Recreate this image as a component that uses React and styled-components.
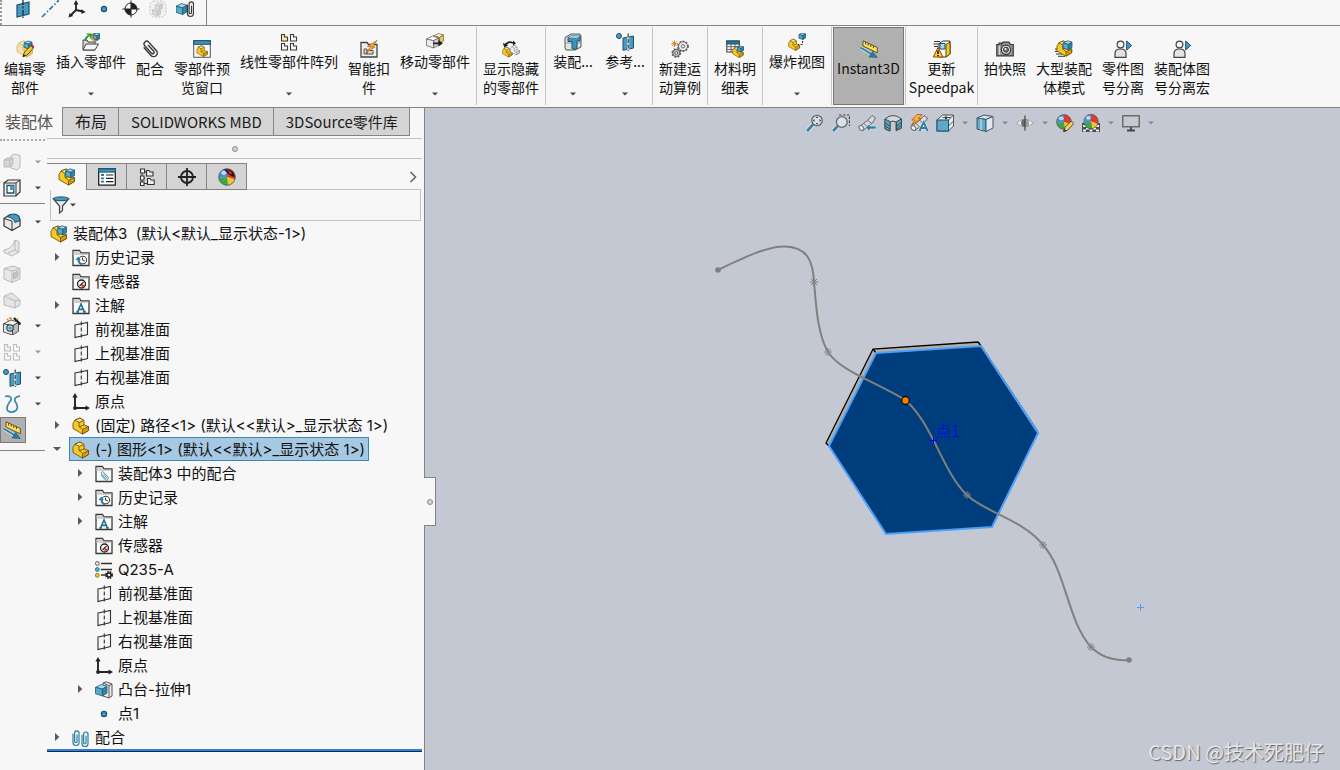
import React from "react";
import styled, { createGlobalStyle, css } from "styled-components";

const GlobalStyle = createGlobalStyle`
  *, *::before, *::after { box-sizing: border-box; }
  body {
    margin: 0;
    background: #f7f7f7;
    color: #111;
    font-family: "Noto Sans CJK SC", "Noto Sans", sans-serif;
    font-size: 14px;
  }
  button {
    font: inherit;
    color: inherit;
    background: none;
    border: 0;
    padding: 0;
    margin: 0;
  }
  svg { display: block; flex: none; }
`;

/* ---------- icon drawings, each on an 18 x 18 grid ---------- */

const INK = "#3a3a3a";
const BLUE = "#4a9abd";
const DEEP = "#17506e";
const PALE = "#a9d6e8";
const GOLD = "#f9c926";
const AMBER = "#d79b12";

const Cube = ({ x = 0, y = 0, s = 8, top = PALE, left = "#5aa9ca", right = "#3585aa", line = "#1b5c7e" }) => (
  <g transform={`translate(${x} ${y}) scale(${s / 10})`} stroke={line} strokeWidth={8 / s} strokeLinejoin="round">
    <path d="M0 2.5L5 0L10 1.5L6 4Z" fill={top} />
    <path d="M0 2.5L6 4V10L0 8Z" fill={left} />
    <path d="M6 4L10 1.5V7.5L6 10Z" fill={right} />
  </g>
);

const Bracket = ({ x = 0, y = 0, s = 1, a = GOLD, b = AMBER, c = "#ffe27a", line = "#6e560e" }) => (
  <g transform={`translate(${x} ${y}) scale(${s})`} stroke={line} strokeWidth="0.9" strokeLinejoin="round">
    <path d="M1 6.5L3 3L8 1L12 3.5V8L16.5 9.5V13.5L10.5 17L1 11.5Z" fill={a} />
    <path d="M3 3L8 1L12 3.5L7 5.5Z" fill={c} />
    <path d="M10.5 12.5L16.5 9.5V13.5L10.5 17Z" fill={b} />
    <path d="M7 5.5V9.5L10.5 12.5M12 8L7 9.8" fill="none" />
  </g>
);

const Clip = ({ color = INK, t = "" }) => (
  <g transform={t} fill="none" stroke={color} strokeWidth="1.2" strokeLinecap="round">
    <path d="M6 5V13.5a3 3 0 0 0 6 0V4a2.2 2.2 0 0 0-4.4 0V12.5a1.2 1.2 0 0 0 2.4 0V6" />
  </g>
);

const Folder = ({ children }) => (
  <g>
    <path d="M1 16.5V1.5H7.5L9 4H17V16.5Z" fill="#fdfdfd" stroke={INK} strokeWidth="1.3" />
    <path d="M1.6 2.2H7.2L8.6 4.6H16.4V6H1.6Z" fill="#d0d0d0" />
    {children}
  </g>
);

const Ruler = () => (
  <g>
    <path d="M3 0.8L17.3 7.5V12.8L3 6Z" fill="#ffe066" stroke="#5c4708" strokeWidth="0.9" />
    <path d="M5.6 2.2V4.6M8.2 3.4V5.8M10.8 4.6V7M13.4 5.8V8.2" stroke="#4a3a08" strokeWidth="0.9" />
    <path d="M0.5 7.5L11 14" stroke="#e4eef4" strokeWidth="3.2" />
    <path d="M0.5 7.5L12 14.6" stroke="#2a7ba3" strokeWidth="1.8" />
    <path d="M17.4 17.6L9 17L12.6 11.4Z" fill="#2a7ba3" stroke="#14506e" strokeWidth="0.5" />
  </g>
);

const Blocks = ({ light }) => (
  <g fill="#fafafa" stroke={light ? "#bdbdbd" : INK} strokeWidth="1.1">
    <path d="M1.5 1.5H4.5V4H7.5V8H1.5Z" fill={light ? "#eee" : "#ffe9a0"} />
    <path d="M10.5 1.5H13.5V4H16.5V8H10.5Z" />
    <path d="M1.5 10.5H4.5V13H7.5V17H1.5Z" />
    <path d="M10.5 10.5H13.5V13H16.5V17H10.5Z" />
  </g>
);

const Ball = ({ r = 8, cx = 9, cy = 9 }) => (
  <g transform={`translate(${cx} ${cy}) scale(${r / 8})`}>
    <path d="M0 0L-7.9 1A8 8 0 0 1 0 -8Z" fill="#4d8fd6" />
    <path d="M0 0V-8A8 8 0 0 1 7.6 2.5Z" fill="#dd3a38" />
    <path d="M0 0L7.6 2.5A8 8 0 0 1 1 8Z" fill="#f1c62e" />
    <path d="M0 0L1 8A8 8 0 0 1 -7.9 1Z" fill="#3ba64a" />
    <circle r="8" fill="none" stroke="#555" strokeWidth="0.8" />
    <ellipse cx="-3" cy="-4" rx="2.6" ry="2" fill="#fff" opacity="0.65" />
  </g>
);

const Lens = ({ cx = 11, cy = 6.5, r = 5.2 }) => (
  <g>
    <path d={`M${cx - 4} ${cy + 4}L1.8 16.2`} stroke="#e6edf3" strokeWidth="4.4" strokeLinecap="round" />
    <path d={`M${cx - 4} ${cy + 4}L1.8 16.2`} stroke="#3f84a5" strokeWidth="2.8" strokeLinecap="round" />
    <circle cx={cx} cy={cy} r={r} fill="#d8e2ea" stroke="#666" strokeWidth="1.3" />
  </g>
);

const Scope = () => (
  <g stroke="#6a6a6a" strokeLinejoin="round">
    <path d="M1 13L10 6L14 1.5L17.5 4L14.5 9L5 16.5Q2 17 1 13Z" fill="#d9d9d9" />
    <path d="M9.5 6.5L14 9.5M6 9.5L9.5 13" fill="none" />
    <ellipse cx="3.4" cy="14" rx="2" ry="2.6" transform="rotate(-45 3.4 14)" fill="#f5f5f5" />
  </g>
);

const Person = () => (
  <g>
    <circle cx="6.5" cy="4.5" r="3.4" fill="#f5f5f5" stroke="#444" strokeWidth="1.2" />
    <path d="M1 17.3V13.5Q1 9 6.5 9Q12 9 12 13.5V17.3Z" fill="#e3e3e3" stroke="#444" strokeWidth="1.2" />
    <path d="M12.7 1L17.6 5.5L12.7 10Z" fill={BLUE} stroke={DEEP} />
  </g>
);

const Gear = ({ cx, cy, r, fill }) => (
  <g transform={`translate(${cx} ${cy})`}>
    <circle r={r} fill="none" stroke="#555" strokeWidth="2" strokeDasharray="1.6 1.5" />
    <circle r={r - 0.3} fill={fill} stroke="#555" strokeWidth="0.9" />
    <circle r={r * 0.35} fill="#fff" stroke="#555" strokeWidth="0.9" />
  </g>
);

const ART = {
  planeBlue: (
    <g>
      <path d="M3 5L15 2V14L3 17Z" fill={BLUE} stroke={DEEP} strokeWidth="1.2" />
      <path d="M9 0V18" stroke="#123" strokeWidth="1.2" strokeDasharray="5 1.5 2 1.5" />
    </g>
  ),
  axis: <path d="M1 17L18 0" stroke="#2b7196" strokeWidth="1.6" strokeDasharray="5 2 1.5 2" />,
  csys: (
    <g stroke="#222" strokeWidth="1.8" fill="#222">
      <path d="M8 10V3M8 10L15 11.5M8 10L3 15" />
      <path d="M8 0L10.4 4.4H5.6ZM17.6 12L13.4 14V9.2ZM0.5 17.5L1.6 13L5.2 16Z" stroke="none" />
    </g>
  ),
  point: <circle cx="9" cy="9" r="2.6" fill={BLUE} stroke={DEEP} strokeWidth="1.2" />,
  com: (
    <g>
      <circle cx="9" cy="9" r="6" fill="#fff" stroke="#222" />
      <path d="M9 9V3A6 6 0 0 1 15 9ZM9 9V15A6 6 0 0 1 3 9Z" fill="#222" />
      <path d="M9 0.5V17.5M0.5 9H17.5" stroke="#222" />
    </g>
  ),
  ghostSolid: (
    <g>
      <path d="M4 1H14L17 4V14L14 17H4L1 14V4Z" fill="#f1f1f1" stroke="#c4c4c4" strokeDasharray="2 1.5" />
      <Cube x={3.5} y={8} s={8} top="#e6e6e6" left="#d8d8d8" right="#cccccc" line="#c4c4c4" />
      <Cube x={6.5} y={3} s={7} top="#eaeaea" left="#dcdcdc" right="#d0d0d0" line="#c4c4c4" />
    </g>
  ),
  cubeClip: (
    <g>
      <Cube x={0} y={3.5} s={11} />
      <Clip t="translate(5.5 0)" />
    </g>
  ),
  edit: (
    <g>
      <Bracket a="#f6e2a0" b="#e5c971" c="#fbf0c8" line="#cbb878" />
      <Cube x={8} y={1} s={8} />
      <path d="M7 16.5L8.5 12L15 5.5L17.5 8L11.5 14.8Z" fill={GOLD} stroke="#4a3a08" strokeWidth="0.9" />
      <path d="M15 5.5L17.5 8L18 6.5L16.2 4.8Z" fill="#c33" stroke="#812" strokeWidth="0.6" />
      <path d="M6.6 17L7.6 14L9.5 16Z" fill="#222" />
    </g>
  ),
  insert: (
    <g>
      <Bracket x={8} y={0} s={0.5} />
      <Cube x={11} y={0} s={7} />
      <path d="M1 17V7H5L6 9H13V17Z" fill="#d9d9d9" stroke="#444" />
      <path d="M1 17L4 11H16.5L13 17Z" fill="#f4f4f4" stroke="#444" />
      <path d="M3.5 8Q3.5 4 6.5 3.2" fill="none" stroke="#2b9a30" strokeWidth="2" />
      <path d="M4 0.5H9.5V5.5Z" fill="#2b9a30" />
    </g>
  ),
  clip: <Clip t="translate(9 9) rotate(-42) scale(1.2) translate(-9 -9)" />,
  preview: (
    <g>
      <rect x="0.7" y="0.7" width="16.6" height="16.6" fill="#f8f8f8" stroke="#555" />
      <rect x="0.7" y="0.7" width="16.6" height="3.6" fill="#3f91b8" stroke={DEEP} />
      <Bracket x={3.2} y={5} s={0.68} />
    </g>
  ),
  pattern: <Blocks />,
  ghostPattern: <Blocks light />,
  smart: (
    <g>
      <path d="M1 17V2.5H7L8.5 4.5H17V17Z" fill="#efefef" stroke="#444" strokeWidth="1.3" />
      <path d="M4 9H7V14H4ZM7 10.5H13V14H7Z" fill="#d4d4d4" stroke="#555" />
      <path d="M17 0.5L7.5 6.5H11L6 12.5L15 7H11.8Z" fill="#f7c22c" stroke="#c5661a" strokeWidth="0.9" />
    </g>
  ),
  move: (
    <g>
      <Cube x={7.5} y={0.5} s={10} top="#fdf0c0" left="#f2dc95" right="#e3c76a" line="#7a6a38" />
      <Cube x={0.5} y={3} s={12} top="#fafafa" left="#ececec" right="#d2d2d2" line="#666" />
      <path d="M7 9.5H12.5V7L17 10.2L12.5 13.4V11.2H7Z" fill="#222" />
    </g>
  ),
  showHide: (
    <g>
      <Bracket x={0} y={6.5} s={0.62} />
      <Bracket x={8} y={5} s={0.58} a="#f3f3f3" b="#cfcfcf" c="#fff" line="#777" />
      <path d="M3 5.5Q6 0.5 11 3" fill="none" stroke="#222" strokeWidth="1.6" />
      <path d="M0.8 3L6.4 5L2.4 7.6Z" fill="#222" />
      <path d="M11 0.5V5.8L14 3.2Z" fill="#222" />
    </g>
  ),
  asmFeature: (
    <g>
      <path d="M1 4.5L7 1H16L17 3V14L11 17H2L1 15Z" fill="#e2e2e2" stroke="#555" />
      <path d="M1 10H17" stroke="#999" />
      <path d="M4 4.5L7 3H16V8H13V15.5L11 16.5L8 15.5V8.5H4Z" fill="#3f91b8" stroke={DEEP} />
      <path d="M4 4.5L7 3H16L13 4.8Z" fill={PALE} />
    </g>
  ),
  refGeo: (
    <g>
      <circle cx="3" cy="3" r="2.5" fill={BLUE} stroke={DEEP} />
      <path d="M7 5L17.5 3V15L7 17.3Z" fill={BLUE} stroke={DEEP} />
      <path d="M12.2 1V18" stroke="#dceaf1" strokeWidth="2" />
      <path d="M12.2 0.5V18" stroke="#222" strokeDasharray="4 1.5" />
    </g>
  ),
  motion: (
    <g>
      <Gear cx={12} cy={6.3} r={4.8} fill="#ececec" />
      <Gear cx={5.3} cy={13} r={3.9} fill="#bdbdbd" />
      <path d="M3.5 0.5V7M0.3 3.7H6.8M1.2 1.4L5.8 6M5.8 1.4L1.2 6" stroke="#d8761a" strokeWidth="0.9" />
    </g>
  ),
  bom: (
    <g>
      <rect x="0.8" y="1" width="12.4" height="11" fill="#fff" stroke="#333" />
      <rect x="0.8" y="1" width="12.4" height="3" fill="#2f7698" stroke={DEEP} />
      <path d="M1 6.7H13M1 9.4H13M5 4V12M9 4V12" stroke="#555" strokeWidth="0.9" />
      <Bracket x={6} y={6} s={0.68} />
      <Cube x={11.5} y={6} s={6} />
    </g>
  ),
  explode: (
    <g>
      <Bracket x={0} y={5.5} s={0.7} />
      <Cube x={11} y={0} s={6.5} />
      <path d="M14.5 8V11.5H10" fill="none" stroke="#222" strokeDasharray="2 1.4" />
    </g>
  ),
  instant: <Ruler />,
  speedpak: (
    <g>
      <path d="M1 1.5H7M0.5 4H6M1 6.5H5" stroke="#333" />
      <path d="M6 3.5L10 1H17V14L13 17H6Z" fill="#fafafa" stroke="#333" />
      <path d="M7 3.5H12V9H7Z" fill={PALE} stroke={DEEP} />
      <path d="M13 4.5L17 2V14L13 17Z" fill={GOLD} stroke="#5c4708" />
      <path d="M5 7.5L10 17H0.3Z" fill="#ffd21f" stroke="#a13c10" />
      <path d="M5 10.5V14M5 15V16.2" stroke="#111" strokeWidth="1.6" />
    </g>
  ),
  camera: (
    <g>
      <path d="M0.8 4.5H3V3H5.5V4.5L7 2.2H13L14.5 4.5H17.2V15.8H0.8Z" fill="#9b9b9b" stroke="#333" strokeWidth="1.2" />
      <path d="M3.5 6V14.5" stroke="#ddd" />
      <circle cx="10" cy="9.7" r="4.6" fill="#e6e6e6" stroke="#333" strokeWidth="1.2" />
      <circle cx="10" cy="9.7" r="2.5" fill="#777" stroke="#333" />
      <circle cx="9.4" cy="9" r="0.9" fill="#fff" />
    </g>
  ),
  largeAsm: (
    <g>
      <path d="M0 9H5M0 11.5H6M1 14H8M3 16.3H10" stroke="#333" />
      <Bracket x={1} y={0} s={0.95} />
      <Cube x={8} y={0.8} s={9} />
    </g>
  ),
  person: <Person />,
  asm: (
    <g>
      <Bracket />
      <Cube x={7.5} y={0.8} s={9} />
    </g>
  ),
  part: <Bracket />,
  propMgr: (
    <g>
      <rect x="0.7" y="0.9" width="16.6" height="16.2" fill="#fff" stroke="#222" strokeWidth="1.3" />
      <rect x="0.7" y="0.9" width="16.6" height="3.2" fill="#3f91b8" stroke={DEEP} />
      <path d="M3 7H6M3 10.3H6M3 13.6H6" stroke="#2f7698" strokeWidth="1.8" />
      <path d="M8 7H15.4M8 10.3H15.4M8 13.6H15.4" stroke="#222" strokeWidth="1.2" />
    </g>
  ),
  config: (
    <g fill="#eee" stroke="#333" strokeWidth="1.1">
      <path d="M4 5V15.5H10M4 10H7M4 4H9" fill="none" />
      <path d="M2.5 1H6.5V5H2.5ZM2.5 8H6V12H2.5ZM2.5 14H6V17.5H2.5Z" fill="#fff" />
      <path d="M8.5 2.5H11L12 4H15V8H8.5ZM9.5 10.5H12L13 12H16.2V16.5H9.5Z" />
    </g>
  ),
  target: (
    <g fill="none" stroke="#222" strokeWidth="1.8">
      <circle cx="9" cy="9" r="6" />
      <path d="M9 0V18M0 9H18" />
    </g>
  ),
  appearance: (
    <g>
      <Ball r={8.3} />
      <path d="M6 1.4Q12 0.5 15.5 5L17 9Q12 8.6 6 1.4Z" fill="#111" opacity="0.9" />
      <path d="M8.6 1.6L12.4 6.6L14.6 5Z" fill="#e33" />
    </g>
  ),
  funnel: (
    <g>
      <path d="M1.5 3L7.5 10V17L10.5 14.5V10L16.5 3Z" fill="#e6e6e6" stroke="#444" strokeWidth="1.2" />
      <ellipse cx="9" cy="2.8" rx="7.8" ry="1.9" fill={BLUE} stroke={DEEP} />
    </g>
  ),
  history: (
    <Folder>
      <circle cx="10.8" cy="11" r="3.8" fill="#fff" stroke="#444" strokeWidth="1.1" />
      <path d="M10.5 8.6V11L12.8 12" fill="none" stroke="#333" />
      <path d="M10.5 15.2A4.2 4.2 0 0 1 6.4 10" fill="none" stroke="#2b7fae" strokeWidth="1.7" />
      <path d="M3.4 11L6.4 7.4L9 11.2Z" fill="#2b7fae" />
    </Folder>
  ),
  sensor: (
    <Folder>
      <circle cx="9.5" cy="11" r="4" fill="#fff" stroke="#222" strokeWidth="1.3" />
      <path d="M9.5 11L13.2 12Q12.4 14.4 9.5 14.6Z" fill="#e13c1c" />
      <path d="M7.5 13L11.6 8.8" stroke="#222" strokeWidth="1.2" />
    </Folder>
  ),
  note: (
    <Folder>
      <path d="M5.5 15L9 7L12.5 15M6.8 12.4H11.2" fill="none" stroke="#256f94" strokeWidth="1.6" />
      <path d="M4.2 15H7M11 15H14" stroke="#256f94" strokeWidth="1.3" />
    </Folder>
  ),
  mateFolder: (
    <Folder>
      <Clip color="#2f7f9f" t="translate(9.4 11) rotate(-42) scale(0.66) translate(-9 -9)" />
    </Folder>
  ),
  plane: (
    <g fill="none" stroke="#333" strokeWidth="1.1">
      <path d="M3 4L15.5 1.5V13.5L3 16.5Z" />
      <path d="M9.3 0.5V17.5" strokeDasharray="4 2" />
    </g>
  ),
  origin: (
    <g fill="#222">
      <path d="M3 3V15H14" fill="none" stroke="#222" strokeWidth="1.9" />
      <path d="M3 0L5.6 4.6H0.4ZM18 15L13.6 17.6V12.4Z" />
      <circle cx="3" cy="15" r="1.9" />
    </g>
  ),
  material: (
    <g>
      <path d="M6 2.5H17M6 8.5H17M6 14H11" stroke="#333" strokeWidth="1.7" />
      <circle cx="2.3" cy="2.5" r="1.9" fill="#eee" stroke="#555" />
      <circle cx="2.3" cy="8.5" r="1.9" fill="#5aafd0" stroke="#2b7196" />
      <circle cx="2.3" cy="14.3" r="1.9" fill={GOLD} stroke="#9a7a10" />
      <circle cx="14" cy="14" r="3" fill="none" stroke="#222" strokeWidth="2" strokeDasharray="1.5 0.9" />
      <circle cx="14" cy="14" r="2" fill="none" stroke="#222" strokeWidth="1.5" />
    </g>
  ),
  extrude: (
    <g>
      <path d="M8 2L11 0.8L17 3V15L14 17L8 15Z" fill="#f1f1f1" stroke="#555" />
      <path d="M14 4.6V17M8 2L14 4.6L17 3" fill="none" stroke="#555" />
      <Cube x={0.5} y={3.5} s={11.5} />
    </g>
  ),
  mates: (
    <g>
      <Clip color="#2b7fa3" t="translate(-5 0)" />
      <Clip color="#2b7fa3" t="translate(4 1.2)" />
    </g>
  ),
  ghostBlocks: (
    <g fill="#e9e9e9" stroke="#b9b9b9" strokeLinejoin="round">
      <path d="M8 3L11 1L17 2.5V14L14 17L8 15Z" />
      <path d="M1 7L4 5H10V11L7 14H1Z" fill="#d6d6d6" />
      <path d="M1 7H7V14M7 7L10 5" fill="none" />
    </g>
  ),
  inset: (
    <g>
      <path d="M1 4L5 1H17V13L13 17H1Z" fill="#f1f1f1" stroke="#333" strokeWidth="1.2" />
      <path d="M1 4H13V17M13 4L17 1" fill="none" stroke="#333" />
      <path d="M4 6.5H10.8V14H4Z" fill="#fff" stroke={DEEP} strokeWidth="1.3" />
      <path d="M7 6.5H10.8V11H7Z" fill={BLUE} />
    </g>
  ),
  fillet: (
    <g>
      <path d="M1 5.5L7 1.5L13 1.5Q17 3 17 8V13L9 17.5L1 13Z" fill="#e9e9e9" stroke="#333" strokeWidth="1.2" />
      <path d="M1 5.5L9 8V17.5" fill="none" stroke="#333" />
      <path d="M4 3.5L8.5 1.2H13Q17 3 17 7.5L12 9.5Q11 5 4 3.5Z" fill={BLUE} stroke={DEEP} />
    </g>
  ),
  ghostRib: (
    <g fill="#e7e7e7" stroke="#b9b9b9" strokeLinejoin="round">
      <path d="M12 1L16 2.5V13L9 17L1 13.5V11Q9 10 12 1Z" />
      <path d="M12 1V11L5 14M12 11L16 13" fill="none" />
    </g>
  ),
  ghostShell: (
    <g fill="#e7e7e7" stroke="#b9b9b9" strokeLinejoin="round">
      <path d="M1 3.5L10 1L17 3.5V14L9 17.5L1 14Z" />
      <path d="M9 6V17.5M1 3.5L9 6L17 3.5" fill="none" />
      <path d="M10.5 8L15 6V12L10.5 14Z" fill="#c4c4c4" />
    </g>
  ),
  ghostDraft: (
    <g fill="#e4e4e4" stroke="#b9b9b9" strokeLinejoin="round">
      <path d="M1 5L9 2L17 9V14L12 17L1 14Z" />
      <path d="M1 5L12 10V17M12 10L17 9" fill="none" />
    </g>
  ),
  wizard: (
    <g>
      <Cube x={0.5} y={3} s={15} top="#f3f3f3" left="#e2e2e2" right="#bdbdbd" line="#333" />
      <circle cx="7" cy="11" r="3.2" fill={PALE} stroke="#333" strokeWidth="1.1" />
      <circle cx="7" cy="11" r="1.5" fill={BLUE} />
      <path d="M11 1L17.5 7.5" stroke="#222" strokeWidth="2.4" />
      <path d="M4 2L6 4M8 0.5V3.5M15 1.5L13.5 3M6 1H8" stroke="#e07a1a" strokeWidth="1.3" />
    </g>
  ),
  curve: (
    <path d="M2 1.5Q9 0 8 5Q2 13 5 16Q9 18.5 13 15.5Q16 12 12.5 7Q10 2 17 1" fill="none" stroke="#3a86a8" strokeWidth="1.7" />
  ),
  zoomFit: (
    <g>
      <Lens />
      <path d="M11 2.4L12.4 4H9.6ZM11 10.6L12.4 9H9.6ZM6.9 6.5L8.5 5.1V7.9ZM15.1 6.5L13.5 5.1V7.9Z" fill="#333" />
    </g>
  ),
  zoomArea: (
    <g>
      <path d="M7 1H17.5V12" fill="none" stroke="#444" strokeDasharray="2.5 1.5" strokeWidth="1.2" />
      <Lens cx={9.8} cy={8} r={5.4} />
    </g>
  ),
  prevView: (
    <g>
      <Scope />
      <path d="M7.5 13.5L12 9.5V12H18V15H12V17.5Z" fill="#2f7fa5" stroke="#dce4ee" strokeWidth="0.7" />
    </g>
  ),
  section: (
    <g stroke="#4a4a4a" strokeLinejoin="round">
      <path d="M1 5Q9 -2 17.5 5V14L12 16.5V8Q9 6 6 8V17L1 14.5Z" fill="#d5d9de" />
      <path d="M1 5L6 7.5V17L1 15Z" fill="#5aa5c5" />
      <path d="M17.5 5L12.5 7.5V16.5L17.5 14Z" fill="#5aa5c5" />
      <path d="M1.5 9L5.5 12M1.5 12L5.5 15M13 12L17 8.5M13 15L17 11.5" stroke="#1d4f68" />
    </g>
  ),
  annotate: (
    <g>
      <Scope />
      <path d="M7 0.5H12L8.5 4.5H11.5L1.5 11L5 6H1.8Z" fill="#f4b53a" stroke="#b8621c" strokeWidth="0.9" />
      <path d="M9.5 17L13.7 8.2L17.6 17M11 14H16" fill="none" stroke="#dfe6ee" strokeWidth="3.4" />
      <path d="M9.5 17L13.7 8.2L17.6 17M11 14H16" fill="none" stroke="#2f7fa5" strokeWidth="1.9" />
    </g>
  ),
  orient: (
    <g>
      <path d="M1 6L6.5 1H17.5V12L12.5 17H1Z" fill="#e7eaee" stroke="#555" />
      <path d="M12.5 6L17.5 1M12.5 12L17.5 7M6.5 3.5H15" stroke="#555" />
      <rect x="1" y="6" width="11.5" height="11" fill="#5fa8c6" stroke={DEEP} />
      <path d="M10 1.5V5M8.5 3.5L10 5.2L11.5 3.5" fill="none" stroke="#333" />
    </g>
  ),
  display: (
    <g stroke="#3f5866" strokeLinejoin="round">
      <path d="M1 4L8 1L17 2.5L10 5.5Z" fill="#cfe4ee" />
      <path d="M1 4L10 5.5V17.5L1 15Z" fill="#64aac8" />
      <path d="M10 5.5L17 2.5V14L10 17.5Z" fill="#dfe9ef" />
      <path d="M5 4.8V16" stroke="#d5e8f0" />
    </g>
  ),
  eye: (
    <g>
      <path d="M0.5 9Q9 1.5 17.5 9Q9 16.5 0.5 9Z" fill="#ececec" stroke="#a4a4a4" />
      <circle cx="9" cy="9" r="3.9" fill="#6d6d6d" />
      <path d="M9 9V5.1A3.9 3.9 0 0 1 9 12.9Z" fill="#9f9f9f" />
      <path d="M9 1.5V16.5" stroke="#444" strokeWidth="1.2" />
    </g>
  ),
  editLook: (
    <g>
      <Ball r={7.4} cx={8} cy={8} />
      <path d="M7.5 17.7L9 13.3L15.3 7L17.8 9.5L11.8 16Z" fill="#f2cf62" stroke="#5a4a1c" />
      <path d="M7.2 18L8.3 14.8L10.4 17Z" fill="#333" />
    </g>
  ),
  scene: (
    <g>
      <rect x="0" y="9" width="18" height="9" fill="#4a4a4a" />
      <path d="M1 11H4V13H1ZM14 11H17V13H14ZM4 13.5H7V15.5H4ZM11 13.5H14V15.5H11ZM1 15.5H4V17.5H1ZM7.5 15.5H10.5V17.5H7.5ZM14 15.5H17V17.5H14Z" fill="#f1f1f1" />
      <Ball r={7.2} cx={9} cy={7.5} />
    </g>
  ),
  monitor: (
    <g>
      <rect x="0.8" y="1.8" width="16.4" height="11" fill="#c7c9cd" stroke="#555" strokeWidth="1.2" />
      <path d="M9 13V16M5 16.5H13" stroke="#444" strokeWidth="1.8" />
    </g>
  ),
};

const Icon = ({ name }) => (
  <svg width="18" height="18" viewBox="0 0 18 18" fill="none" aria-hidden="true">
    {ART[name]}
  </svg>
);

const CaretDown = ({ color = "#444" }) => (
  <svg width="6" height="4" viewBox="0 0 6 4" aria-hidden="true">
    <path d="M0 0.5H6L3 3.5Z" fill={color} />
  </svg>
);

/* ---------- page frame ---------- */

const Page = styled.div`
  display: flex;
  flex-direction: column;
  min-height: 100vh;
`;

const QuickBar = styled.div`
  display: flex;
  height: 26px;
  border-bottom: 1px solid #848484;
`;

const QuickGroup = styled.div`
  display: flex;
  align-items: flex-start;
  gap: 9px;
  padding: 0 12px;
  border-left: 2px dotted #9a9a9a;
  border-right: 1px solid #848484;
`;

const Ribbon = styled.div`
  display: flex;
  height: 82px;
  padding: 1px 0 2px;
  border-bottom: 1px solid #848484;
`;

const RibbonGroup = styled.div`
  display: flex;
  gap: 10px;
  padding: 0 ${(p) => (p.$tight ? 1 : 6)}px;
  border-right: ${(p) => (p.$last ? 0 : 1)}px solid #c6c6c6;
  &:first-child { padding-left: 4px; }
`;

const RibbonButton = styled.button`
  display: flex;
  flex-direction: column;
  align-items: center;
  gap: 1px;
  width: ${(p) => p.$width}px;
  padding: ${(p) => (p.$menu ? 6 : 13)}px 0 9px;
  line-height: 19px;
  white-space: pre;
  text-align: center;
  ${(p) => p.$pressed && css`
    background: #b0b0b0;
    box-shadow: inset 0 0 0 1px #777;
  `}
  > svg:last-child:not(:first-child) { margin-top: auto; }
`;

const RibbonLabel = styled.span`
  display: block;
`;

const Workspace = styled.div`
  display: flex;
  flex: 1;
`;

const SidePanel = styled.aside`
  display: flex;
  flex-direction: column;
  flex: none;
  width: 425px;
  border-right: 1px solid #848484;
`;

const DocTabs = styled.nav`
  display: flex;
  height: 28px;
  margin-top: -1px;
  position: relative;
`;

const DocTab = styled.button`
  height: 29px;
  padding: 0 ${(p) => (p.$active ? 10 : 11)}px 0 ${(p) => (p.$active ? 5 : 12)}px;
  font-size: ${(p) => (p.$latin ? 15 : 16)}px;
  line-height: 27px;
  white-space: nowrap;
  color: ${(p) => (p.$active ? "#555" : "#1c1c1c")};
  background: ${(p) => (p.$active ? "#f7f7f7" : "#d4d4d4")};
  border: solid #848484;
  border-width: ${(p) => (p.$active ? "0" : "1px 1px 1px 0")};
  ${(p) => p.$active && css`box-shadow: inset -1px 0 0 #848484;`}
`;

const SideBody = styled.div`
  display: flex;
  flex: 1;
`;

/* ---------- narrow tool column ---------- */

const ToolColumn = styled.div`
  flex: none;
  width: 47px;
  padding-top: 4px;
`;

const Grip = styled.div`
  width: 45px;
  height: 10px;
  border-top: 2px dotted #a8a8a8;
`;

const ToolRow = styled.div`
  display: flex;
  align-items: center;
  height: 26px;
`;

const ToolButton = styled.button`
  display: flex;
  flex: none;
  align-items: center;
  justify-content: flex-end;
  width: 26px;
  height: 26px;
  padding-right: 5px;
  ${(p) => p.$pressed && css`
    background: #b0b0b0;
    box-shadow: inset 0 0 0 1px #777;
  `}
`;

const ToolMenuButton = styled.button`
  display: grid;
  place-items: center;
  width: 21px;
  height: 26px;
  padding-left: 2px;
`;

const ToolRule = styled.hr`
  width: 45px;
  margin: ${(p) => (p.$end ? "7px 0 0" : "2px 0 5px")};
  border: 0;
  border-top: 1px solid #848484;
`;

/* ---------- feature manager ---------- */

const Manager = styled.div`
  flex: 1;
  min-width: 0;
  padding: 3px 2px 0 0;
`;

const SplitBar = styled.div`
  display: grid;
  place-items: center;
  height: 21px;
  border: solid #c2c2c2;
  border-width: 1px 0;
`;

const GripDot = styled.span`
  width: 6px;
  height: 6px;
  border: 1px solid #8d8d8d;
  border-radius: 50%;
  background: #d4d4d4;
`;

const ManagerTabs = styled.nav`
  display: flex;
  align-items: stretch;
  height: 27px;
  margin-top: 4px;
  position: relative;
`;

const ManagerTab = styled.button`
  display: grid;
  place-items: center;
  width: 40px;
  background: ${(p) => (p.$active ? "#f7f7f7" : "#d4d4d4")};
  border: solid #848484;
  border-width: ${(p) => (p.$active ? "1px 1px 0 0" : "1px 1px 1px 0")};
`;

const ExpandButton = styled.button`
  display: grid;
  place-items: center;
  width: 18px;
  margin-left: auto;
`;

const FilterBox = styled.label`
  display: flex;
  align-items: center;
  height: 32px;
  margin: -1px 1px 0 3px;
  padding-left: 1px;
  border: 1px solid #c2c2c2;
`;

const FilterInput = styled.input`
  flex: 1;
  min-width: 0;
  border: 0;
  outline: 0;
  background: none;
  font: inherit;
`;

const Tree = styled.ul`
  list-style: none;
  margin: 0;
  padding: 0 0 2px;
  border-bottom: 1px solid #1a1a8c;
  box-shadow: inset 0 -2px 0 #2f86b6;
`;

const TreeItem = styled.li`
  display: flex;
  height: 24px;
  padding-left: ${(p) => p.$depth * 23}px;
`;

const Twisty = styled.span`
  display: grid;
  place-items: center;
  width: ${(p) => (p.$root ? 0 : 18)}px;
  margin: 0 ${(p) => (p.$root ? 0 : "3px 0 1px")};
`;

const TreeLabel = styled.span`
  display: flex;
  align-items: center;
  gap: 5px;
  padding: 2px 3px 0 2px;
  font-family: Inter, "Noto Sans CJK SC", sans-serif;
  font-size: 15px;
  line-height: 20px;
  white-space: pre;
  border: 1px solid transparent;
  ${(p) => p.$selected && css`
    background: #a6c8e2;
    border-color: #3d88b3;
  `}
`;

/* ---------- graphics area ---------- */

const Viewport = styled.main`
  position: relative;
  display: flex;
  flex-direction: column;
  flex: 1;
  min-width: 0;
  background: #c4c8d3;
`;

const ViewBar = styled.div`
  display: flex;
  align-items: center;
  height: 30px;
  padding-left: 377px;
`;

const ViewButton = styled.button`
  display: grid;
  place-items: center;
  width: ${(p) => (p.$menu ? 14 : 26)}px;
  height: 26px;
`;

const Scene = styled.svg`
  flex: 1;
  width: 100%;
  min-height: 0;
`;

const PanelHandle = styled.button`
  position: absolute;
  left: -1px;
  top: 369px;
  display: grid;
  place-items: center;
  width: 12px;
  height: 49px;
  background: #f7f7f7;
  border: 1px solid #848484;
  border-left: 0;
`;

const Watermark = styled.span`
  position: absolute;
  right: 16px;
  bottom: 4px;
  font-size: 20px;
  line-height: 28px;
  color: #e4e6ea;
  text-shadow: 1px 1px 1px #666;
`;

/* ---------- content ---------- */

const QUICK = [
  ["planeBlue", "基准面"], ["axis", "基准轴"], ["csys", "坐标系"], ["point", "点"],
  ["com", "质心"], ["ghostSolid", "边界框"], ["cubeClip", "配合参考"],
];

const RIBBON = [
  { items: [
    { icon: "edit", label: "编辑零\n部件", width: 42 },
    { icon: "insert", label: "插入零部件", width: 70, menu: true },
    { icon: "clip", label: "配合", width: 28 },
    { icon: "preview", label: "零部件预\n览窗口", width: 56 },
    { icon: "pattern", label: "线性零部件阵列", width: 98, menu: true },
    { icon: "smart", label: "智能扣\n件", width: 42 },
    { icon: "move", label: "移动零部件", width: 70, menu: true },
  ] },
  { items: [{ icon: "showHide", label: "显示隐藏\n的零部件", width: 56 }] },
  { items: [
    { icon: "asmFeature", label: "装配...", width: 42, menu: true },
    { icon: "refGeo", label: "参考...", width: 42, menu: true },
  ] },
  { items: [{ icon: "motion", label: "新建运\n动算例", width: 42 }] },
  { items: [{ icon: "bom", label: "材料明\n细表", width: 42 }] },
  { items: [{ icon: "explode", label: "爆炸视图", width: 56, menu: true }] },
  { tight: true, items: [{ icon: "instant", label: "Instant3D", width: 71, pressed: true }] },
  { items: [{ icon: "speedpak", label: "更新\nSpeedpak", width: 59 }] },
  { last: true, items: [
    { icon: "camera", label: "拍快照", width: 42 },
    { icon: "largeAsm", label: "大型装配\n体模式", width: 56 },
    { icon: "person", label: "零件图\n号分离", width: 42 },
    { icon: "person", label: "装配体图\n号分离宏", width: 56 },
  ] },
];

const DOC_TABS = [
  { name: "装配体", active: true },
  { name: "布局" },
  { name: "SOLIDWORKS MBD", latin: true },
  { name: "3DSource零件库", latin: true },
];

const TOOLS_TOP = [
  { icon: "ghostBlocks", name: "拉伸凸台", menu: "#999" },
  { icon: "inset", name: "拉伸切除", menu: "#444" },
];

const TOOLS_MAIN = [
  { icon: "fillet", name: "圆角", menu: "#444" },
  { icon: "ghostRib", name: "筋" },
  { icon: "ghostShell", name: "抽壳" },
  { icon: "ghostDraft", name: "拔模" },
  { icon: "wizard", name: "异型孔向导", menu: "#444" },
  { icon: "ghostPattern", name: "线性阵列", menu: "#999" },
  { icon: "refGeo", name: "参考几何体", menu: "#444" },
  { icon: "curve", name: "曲线", menu: "#444" },
  { icon: "instant", name: "Instant3D", pressed: true },
];

const MANAGER_TABS = [
  ["asm", "设计树"], ["propMgr", "属性"], ["config", "配置"], ["target", "尺寸专家"], ["appearance", "外观"],
];

const TREE = [
  { depth: 0, root: true, icon: "asm", text: "装配体3  (默认<默认_显示状态-1>)" },
  { depth: 0, twisty: "closed", icon: "history", text: "历史记录" },
  { depth: 0, icon: "sensor", text: "传感器" },
  { depth: 0, twisty: "closed", icon: "note", text: "注解" },
  { depth: 0, icon: "plane", text: "前视基准面" },
  { depth: 0, icon: "plane", text: "上视基准面" },
  { depth: 0, icon: "plane", text: "右视基准面" },
  { depth: 0, icon: "origin", text: "原点" },
  { depth: 0, twisty: "closed", icon: "part", text: "(固定) 路径<1> (默认<<默认>_显示状态 1>)" },
  { depth: 0, twisty: "open", icon: "part", text: "(-) 图形<1> (默认<<默认>_显示状态 1>)", selected: true },
  { depth: 1, twisty: "closed", icon: "mateFolder", text: "装配体3 中的配合" },
  { depth: 1, twisty: "closed", icon: "history", text: "历史记录" },
  { depth: 1, twisty: "closed", icon: "note", text: "注解" },
  { depth: 1, icon: "sensor", text: "传感器" },
  { depth: 1, icon: "material", text: "Q235-A" },
  { depth: 1, icon: "plane", text: "前视基准面" },
  { depth: 1, icon: "plane", text: "上视基准面" },
  { depth: 1, icon: "plane", text: "右视基准面" },
  { depth: 1, icon: "origin", text: "原点" },
  { depth: 1, twisty: "closed", icon: "extrude", text: "凸台-拉伸1" },
  { depth: 1, icon: "point", text: "点1" },
  { depth: 0, twisty: "closed", icon: "mates", text: "配合" },
];

const VIEW_TOOLS = [
  { icon: "zoomFit", name: "整屏显示全图" },
  { icon: "zoomArea", name: "局部放大" },
  { icon: "prevView", name: "上一视图" },
  { icon: "section", name: "剖面视图" },
  { icon: "annotate", name: "动态注解视图" },
  { icon: "orient", name: "视图定向", menu: true },
  { icon: "display", name: "显示样式", menu: true },
  { icon: "eye", name: "隐藏/显示项目", menu: true },
  { icon: "editLook", name: "编辑外观" },
  { icon: "scene", name: "应用布景", menu: true },
  { icon: "monitor", name: "视图设定", menu: true },
];

const KNOTS = [[814, 282], [828, 352], [967, 495], [1043, 545], [1091, 647]];

const ToolEntry = ({ tool }) => (
  <ToolRow>
    <ToolButton $pressed={tool.pressed} aria-label={tool.name}><Icon name={tool.icon} /></ToolButton>
    {tool.menu && (
      <ToolMenuButton aria-label={`${tool.name}选项`}><CaretDown color={tool.menu} /></ToolMenuButton>
    )}
  </ToolRow>
);

const TwistyMark = ({ state }) => (
  <svg width="8" height="8" viewBox="0 0 8 8" aria-hidden="true">
    <path d={state === "open" ? "M0 2H8L4 6Z" : "M2 0V8L6.4 4Z"} fill="#5a5a5a" />
  </svg>
);

const Model = () => (
  <Scene viewBox="425 138 915 632" preserveAspectRatio="xMidYMid meet" role="img" aria-label="模型视图">
    <path d="M873 349L978 342L981 346L876 353L829 446L826 443Z" fill="#b3aeaa" />
    <path d="M829 446L826 443L873 349L978 342L981 346M873 349L876 353" fill="none" stroke="#000" strokeWidth="1.3" />
    <path d="M979 342L1038 431" stroke="#333" strokeWidth="1" strokeDasharray="1 1" />
    <path d="M876 353L981 346L1038 433L992 527L886 534L829 446Z" fill="#003d7c" stroke="#4ba0f8" strokeWidth="2" />
    <path
      d="M718 270C745 257 768 246 785 246.5C808 247 813 262 814 282C816 303 817 333 828 352C840 371 878 383 905 400C932 422 943 473 967 495C984 512 1024 520 1043 545C1066 570 1067 620 1091 647C1102 658 1115 661 1129 660"
      fill="none" stroke="#808080" strokeWidth="2"
    />
    <circle cx="718" cy="270" r="2.8" fill="#808080" />
    <circle cx="1129" cy="660" r="2.8" fill="#808080" />
    {KNOTS.map(([x, y]) => (
      <path key={x} d={`M${x - 4} ${y}h8M${x} ${y - 4}v8M${x - 3} ${y - 3}l6 6M${x + 3} ${y - 3}l-6 6`} stroke="#808080" strokeWidth="1" />
    ))}
    <circle cx="905.5" cy="400.5" r="3.8" fill="#ff8000" stroke="#000" strokeWidth="1.2" />
    <path d="M930 440.5H937M933.5 437V444" stroke="#0000ff" strokeWidth="1" />
    <text x="935" y="437" fontSize="16" fill="#0000ff" fontFamily="'Noto Sans CJK SC', sans-serif" fontWeight="300">点1</text>
    <path d="M1137 607.5H1144M1140.5 604V611" stroke="#4ba0f8" strokeWidth="1" />
  </Scene>
);

export default function App() {
  return (
    <Page>
      <GlobalStyle />
      <QuickBar>
        <QuickGroup>
          {QUICK.map(([icon, name]) => (
            <button key={icon} aria-label={name}><Icon name={icon} /></button>
          ))}
        </QuickGroup>
      </QuickBar>
      <Ribbon>
        {RIBBON.map((group, i) => (
          <RibbonGroup key={i} $tight={group.tight} $last={group.last}>
            {group.items.map((item) => (
              <RibbonButton key={item.label} $width={item.width} $menu={item.menu} $pressed={item.pressed}>
                <Icon name={item.icon} />
                <RibbonLabel>{item.label}</RibbonLabel>
                {item.menu && <CaretDown />}
              </RibbonButton>
            ))}
          </RibbonGroup>
        ))}
      </Ribbon>
      <Workspace>
        <SidePanel>
          <DocTabs>
            {DOC_TABS.map((tab) => (
              <DocTab key={tab.name} $active={tab.active} $latin={tab.latin}>{tab.name}</DocTab>
            ))}
          </DocTabs>
          <SideBody>
            <ToolColumn>
              <Grip />
              {TOOLS_TOP.map((tool) => <ToolEntry key={tool.name} tool={tool} />)}
              <ToolRule />
              {TOOLS_MAIN.map((tool) => <ToolEntry key={tool.name} tool={tool} />)}
              <ToolRule $end />
            </ToolColumn>
            <Manager>
              <SplitBar><GripDot /></SplitBar>
              <ManagerTabs>
                {MANAGER_TABS.map(([icon, name], i) => (
                  <ManagerTab key={icon} $active={i === 0} aria-label={name}><Icon name={icon} /></ManagerTab>
                ))}
                <ExpandButton aria-label="展开">
                  <svg width="8" height="12" viewBox="0 0 8 12" fill="none" aria-hidden="true">
                    <path d="M1.5 1L6.5 6L1.5 11" stroke="#666" strokeWidth="1.6" />
                  </svg>
                </ExpandButton>
              </ManagerTabs>
              <FilterBox>
                <Icon name="funnel" />
                <CaretDown />
                <FilterInput aria-label="过滤" />
              </FilterBox>
              <Tree>
                {TREE.map((node, i) => (
                  <TreeItem key={i} $depth={node.depth}>
                    <Twisty $root={node.root}>{node.twisty && <TwistyMark state={node.twisty} />}</Twisty>
                    <TreeLabel $selected={node.selected}>
                      <Icon name={node.icon} />
                      {node.text}
                    </TreeLabel>
                  </TreeItem>
                ))}
              </Tree>
            </Manager>
          </SideBody>
        </SidePanel>
        <Viewport>
          <ViewBar>
            {VIEW_TOOLS.map((tool) => (
              <React.Fragment key={tool.icon}>
                <ViewButton aria-label={tool.name}><Icon name={tool.icon} /></ViewButton>
                {tool.menu && (
                  <ViewButton $menu aria-label={`${tool.name}选项`}><CaretDown color="#85888f" /></ViewButton>
                )}
              </React.Fragment>
            ))}
          </ViewBar>
          <Model />
          <PanelHandle aria-label="折叠面板"><GripDot /></PanelHandle>
          <Watermark>CSDN @技术死肥仔</Watermark>
        </Viewport>
      </Workspace>
    </Page>
  );
}
